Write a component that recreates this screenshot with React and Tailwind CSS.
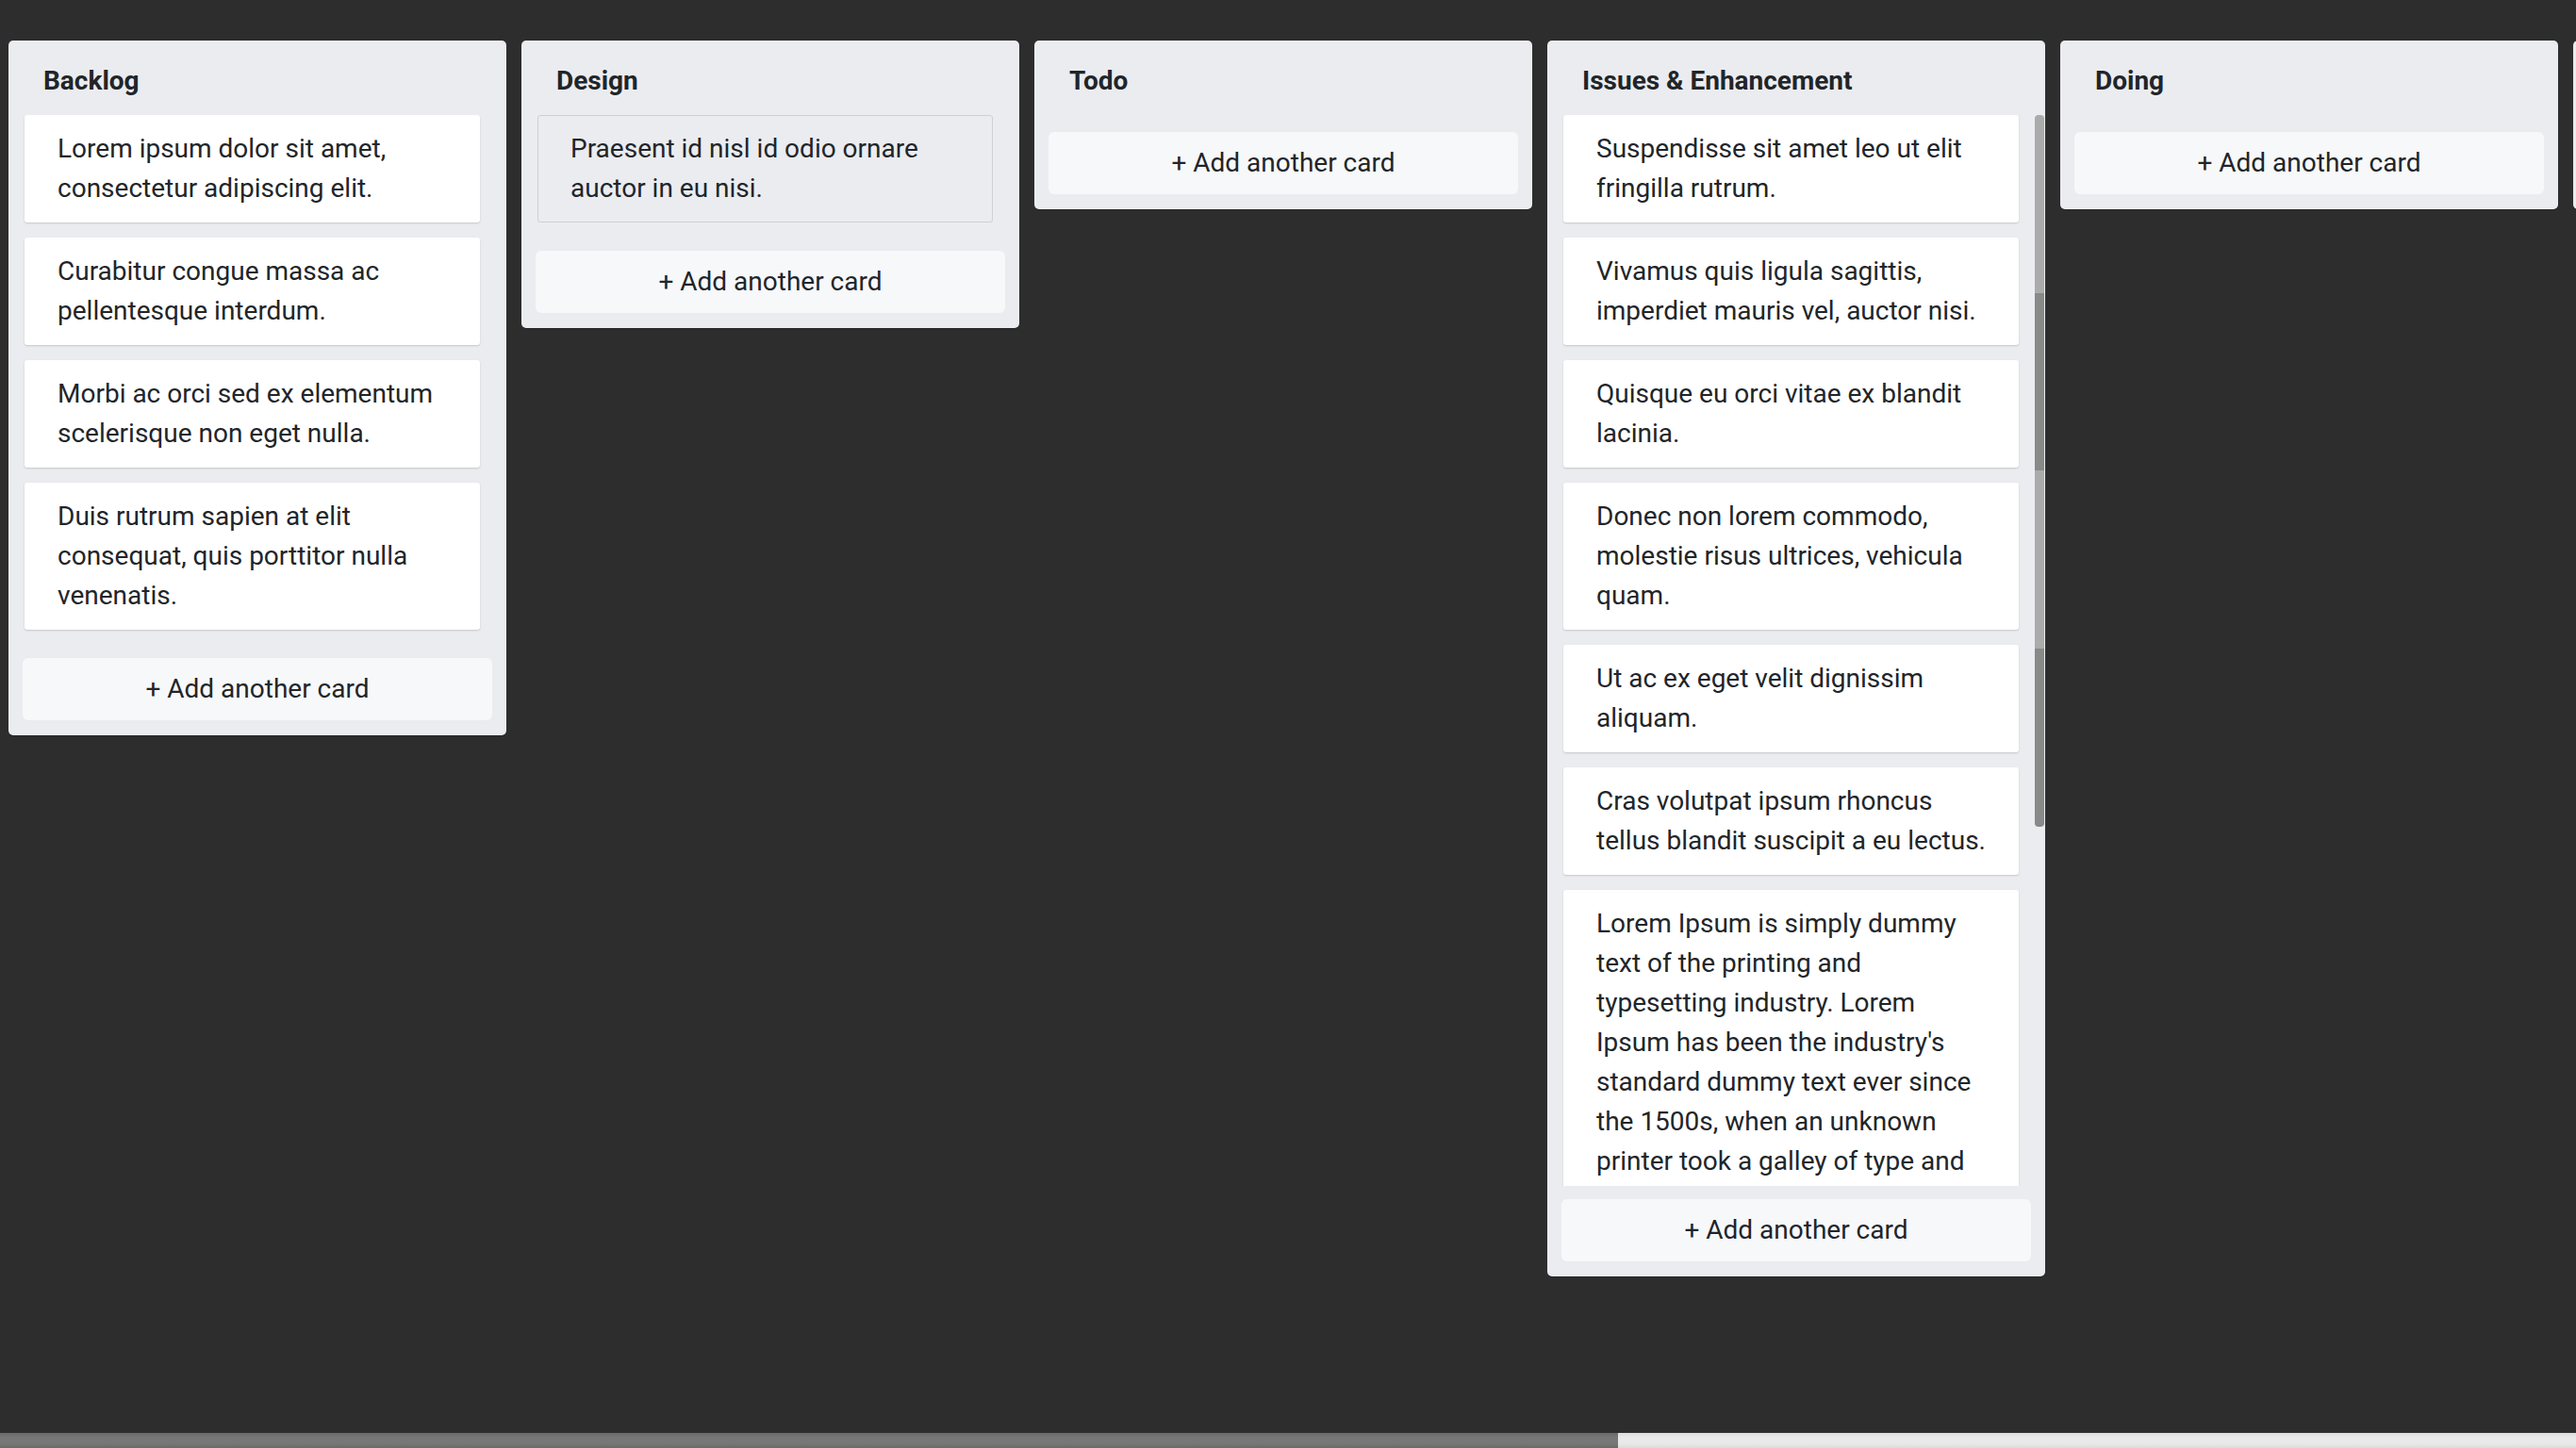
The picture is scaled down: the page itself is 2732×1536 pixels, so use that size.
import React from 'react';

const lorem =
  "Lorem Ipsum is simply dummy text of the printing and typesetting industry. Lorem Ipsum has been the industry's standard dummy text ever since the 1500s, when an unknown printer took a galley of type and scrambled it to make a type specimen book. It has survived not only five centuries, but also the leap into electronic typesetting, remaining essentially unchanged. It was popularised in the 1960s with the release of Letraset sheets containing Lorem Ipsum passages, and more recently with desktop publishing software like Aldus PageMaker including versions of Lorem Ipsum.";

const lists = [
  {
    title: 'Backlog',
    cards: [
      'Lorem ipsum dolor sit amet, consectetur adipiscing elit.',
      'Curabitur congue massa ac pellentesque interdum.',
      'Morbi ac orci sed ex elementum scelerisque non eget nulla.',
      'Duis rutrum sapien at elit consequat, quis porttitor nulla venenatis.',
    ],
  },
  { title: 'Design', cards: ['Praesent id nisl id odio ornare auctor in eu nisi.'], dragging: 0 },
  { title: 'Todo', cards: [] },
  {
    title: 'Issues & Enhancement',
    cards: [
      'Suspendisse sit amet leo ut elit fringilla rutrum.',
      'Vivamus quis ligula sagittis, imperdiet mauris vel, auctor nisi.',
      'Quisque eu orci vitae ex blandit lacinia.',
      'Donec non lorem commodo, molestie risus ultrices, vehicula quam.',
      'Ut ac ex eget velit dignissim aliquam.',
      'Cras volutpat ipsum rhoncus tellus blandit suscipit a eu lectus.',
      lorem,
    ],
    scroll: true,
  },
  { title: 'Doing', cards: [] },
  { title: 'Code Review', cards: [] },
  { title: 'Testing', cards: [] },
  { title: 'Done', cards: [] },
];

function Card({ text, dragging }) {
  return (
    <div
      className={
        dragging
          ? 'mb-4 rounded-[3px] border border-[#cfd0d4] bg-[#ebecf0] px-[34px] py-[14px] text-[28px] leading-[42px] text-[#212529]'
          : 'mb-4 rounded-[3px] bg-white px-[35px] py-[15px] text-[28px] leading-[42px] text-[#212529] shadow-[0_1px_2px_rgba(0,0,0,0.16)]'
      }
    >
      {text}
    </div>
  );
}

function List({ list }) {
  return (
    <div className="flex w-[528px] shrink-0 flex-col rounded-[5px] bg-[#ebecf0] pb-4 shadow-[0_1px_0_rgba(0,0,0,0.2)]">
      <div className="h-[79px] px-[37px] pt-[25px] text-[28px] font-bold leading-[36px] text-[#212529]">{list.title}</div>
      <div className="mr-px flex">
        <div className="max-h-[1136px] min-h-[4px] flex-1 overflow-hidden pl-[17px] pr-[17px]">
          {list.cards.map((c, i) => (
            <Card key={i} text={c} dragging={list.dragging === i} />
          ))}
        </div>
        {/* list scrollbar */}
        <div className="w-[10px] shrink-0">
          {list.scroll && (
            <div className="h-[755px] rounded-[4px] bg-[linear-gradient(#ababab_0_25%,#898989_25%_50%,#ababab_50%_75%,#898989_75%)]" />
          )}
        </div>
      </div>
      <button className="mx-[15px] mt-[14px] h-[66px] rounded-[6px] bg-[#f7f8fa] text-center text-[28px] text-[#212529]">
        + Add another card
      </button>
    </div>
  );
}

export default function App() {
  return (
    <div
      className="flex h-screen w-screen flex-col overflow-hidden bg-[#2d2d2d]"
      style={{ fontFamily: 'Roboto, "Noto Sans", sans-serif' }}
    >
      <div className="flex min-h-0 flex-1 items-start gap-4 overflow-hidden pl-[9px] pt-[43px]">
        {lists.map((l) => (
          <List key={l.title} list={l} />
        ))}
      </div>
      {/* board scrollbar */}
      <div className="flex h-4 shrink-0">
        <div className="w-[1716px] bg-[linear-gradient(#6a6a6a,#777777_30%,#777777_70%,#6a6a6a)]" />
        <div className="flex-1 bg-[linear-gradient(#dcdcdc,#e9e9e9_30%,#e9e9e9_70%,#dcdcdc)]" />
      </div>
    </div>
  );
}
